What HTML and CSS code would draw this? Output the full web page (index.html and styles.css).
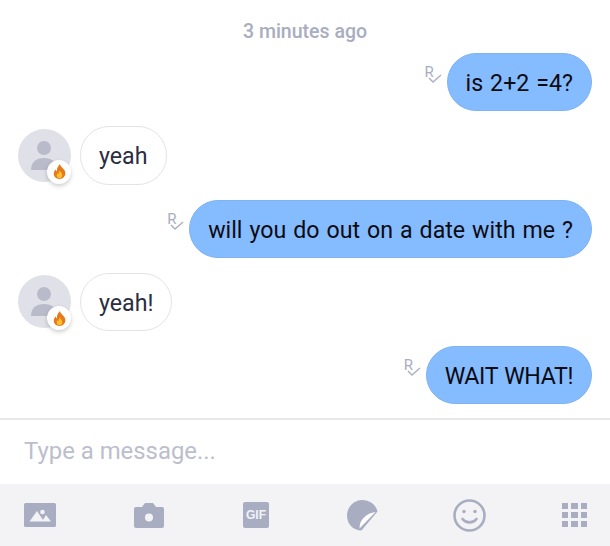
FILE: index.html
```html
<!DOCTYPE html>
<html lang="en">
  <head>
    <meta charset="UTF-8" />
    <meta name="viewport" content="width=device-width, initial-scale=1.0" />
    <title>Chat</title>
    <link rel="stylesheet" href="styles.css">
  </head>
  <body>
    <div class="chat">
      <div class="messages">
        <div class="time">3 minutes ago</div>

        <div class="row row-out">
          <div class="receipt">
            <span>R</span>
            <svg class="tick" viewBox="0 0 14 9"><path d="M1 4l4 4 8-7" /></svg>
          </div>
          <div class="bubble bubble-out">is 2+2 =4?</div>
        </div>

        <div class="row">
          <div class="avatar">
            <svg class="person" viewBox="0 0 53 53">
              <circle cx="26" cy="19" r="7" />
              <path d="M13 41c0-8 5-12 13-12s13 4 13 12z" />
            </svg>
            <div class="badge">
              <svg viewBox="0 0 14 16">
                <path class="flame-outer" d="M7.500 0c.5 3 4 4.500 5.500 8 1.200 3.800-1.500 8-6 8S.2 12.500 1 9c.4-1.500 1.200-2.500 2-3.200.1 1 .5 1.800 1.200 2.200C3.800 5 5.500 2 7.500 0z" />
                <path class="flame-inner" d="M7.300 7c.3 1.500 2.700 2.700 2.700 5.200C10 14 8.700 15 7 15s-3-1.100-3-2.800c0-1.200.7-2 1.300-2.500.1.600.4 1 .8 1.200C6 9.500 6.400 8 7.300 7z" />
              </svg>
            </div>
          </div>
          <div class="bubble bubble-in">yeah</div>
        </div>

        <div class="row row-out">
          <div class="receipt">
            <span>R</span>
            <svg class="tick" viewBox="0 0 14 9"><path d="M1 4l4 4 8-7" /></svg>
          </div>
          <div class="bubble bubble-out">will you do out on a date with me ?</div>
        </div>

        <div class="row">
          <div class="avatar">
            <svg class="person" viewBox="0 0 53 53">
              <circle cx="26" cy="19" r="7" />
              <path d="M13 41c0-8 5-12 13-12s13 4 13 12z" />
            </svg>
            <div class="badge">
              <svg viewBox="0 0 14 16">
                <path class="flame-outer" d="M7.500 0c.5 3 4 4.500 5.500 8 1.200 3.800-1.500 8-6 8S.2 12.500 1 9c.4-1.500 1.200-2.500 2-3.200.1 1 .5 1.800 1.200 2.200C3.800 5 5.500 2 7.500 0z" />
                <path class="flame-inner" d="M7.300 7c.3 1.500 2.700 2.700 2.700 5.200C10 14 8.700 15 7 15s-3-1.100-3-2.800c0-1.200.7-2 1.300-2.500.1.600.4 1 .8 1.200C6 9.500 6.400 8 7.300 7z" />
              </svg>
            </div>
          </div>
          <div class="bubble bubble-in">yeah!</div>
        </div>

        <div class="row row-out">
          <div class="receipt">
            <span>R</span>
            <svg class="tick" viewBox="0 0 14 9"><path d="M1 4l4 4 8-7" /></svg>
          </div>
          <div class="bubble bubble-out bubble-caps">WAIT WHAT!</div>
        </div>
      </div>

      <div class="composer">Type a message...</div>

      <div class="toolbar">
        <svg class="tool-photo" viewBox="0 0 32 24">
          <rect width="32" height="24" rx="1.500" class="fill" />
          <circle cx="18.500" cy="9" r="2.300" class="cut" />
          <path d="M5.500 18.500L13 8l7 10.500zM18 18.500l4-6.500 5 6.500z" class="cut" />
        </svg>
        <svg class="tool-camera" viewBox="0 0 30 25">
          <path class="fill" d="M2 4h6l2.500-3.500q.4-.5 1-.5h7q.6 0 1 .5L22 4h6q2 0 2 2v17q0 2-2 2H2q-2 0-2-2V6q0-2 2-2z" />
          <circle cx="15" cy="14.500" r="4" class="cut" />
        </svg>
        <div class="tool-gif">GIF</div>
        <svg class="tool-sticker" viewBox="0 0 31 31">
          <path class="fill" d="M15 0c8 0 14 5 15.500 11.500L14.500 30.500C6 30.500 0 24 0 15.500 0 7 7 0 15 0z" />
          <path class="peel" d="M28.500 12L12.500 28.500c0-5 1.500-8 4.500-11 3-3 7-5 11.500-5.500z" />
        </svg>
        <svg class="tool-smile" viewBox="0 0 33 33">
          <circle cx="16.500" cy="16.500" r="15" class="line" />
          <circle cx="11" cy="12.500" r="1.700" class="fill" />
          <circle cx="22" cy="12.500" r="1.700" class="fill" />
          <path d="M9.500 20c3.500 4.500 10.500 4.500 14 0" class="line" />
        </svg>
        <div class="tool-grid">
          <i></i><i></i><i></i>
          <i></i><i></i><i></i>
          <i></i><i></i><i></i>
        </div>
      </div>
    </div>
  </body>
</html>
```

FILE: styles.css
```css
body {
  margin: 0;
  padding: 0;
  background-color: #fff;
  font-family: Roboto, "Liberation Sans", sans-serif;
}

.chat {
  width: 610px;
  height: 546px;
  display: flex;
  flex-direction: column;
  overflow: hidden;
}

.messages {
  height: 418px;
  box-sizing: border-box;
  padding: 20px 18px 0;
  display: flex;
  flex-direction: column;
  gap: 15px;
}

.time {
  height: 18px;
  line-height: 24px;
  text-align: center;
  font-size: 19.500px;
  font-weight: 500;
  color: #a9adc0;
}

.row {
  display: flex;
  align-items: center;
  gap: 9px;
}

.row-out {
  justify-content: flex-end;
  gap: 5px;
}

.bubble {
  height: 58.250px;
  box-sizing: border-box;
  padding: 0 18px;
  line-height: 59px;
  font-size: 23.200px;
  word-spacing: 1.200px;
  border-radius: 29px;
  border: 1px solid transparent;
  white-space: nowrap;
}

.bubble-out {
  background-color: #85bcff;
  border-color: #7fb3f2;
  color: #0b0b12;
}

.bubble-caps {
  letter-spacing: -0.400px;
}

.bubble-in {
  background-color: #fff;
  border-color: #e3e4ea;
  color: #2b2d42;
}

.receipt {
  width: 17px;
  height: 22px;
  margin-top: -14px;
  position: relative;
  color: #a9adc0;
  font-size: 15px;
  line-height: 16px;
}

.tick {
  width: 14px;
  height: 9px;
  position: absolute;
  left: 3px;
  top: 10px;
  fill: none;
  stroke: #a9adc0;
  stroke-width: 1.300;
}

.avatar {
  width: 53px;
  height: 53px;
  position: relative;
  border-radius: 50%;
  background-color: #e0e1e8;
  flex-shrink: 0;
}

.person {
  display: block;
  width: 53px;
  height: 53px;
  fill: #b9bbca;
}

.badge {
  width: 24px;
  height: 24px;
  position: absolute;
  left: 29px;
  top: 31px;
  display: flex;
  align-items: center;
  justify-content: center;
  border-radius: 50%;
  background-color: #fff;
  box-shadow: 0 2px 4px rgba(0, 0, 0, 0.2);
}

.badge svg {
  width: 13px;
  height: 15px;
}

.flame-outer {
  fill: #e8781c;
}

.flame-inner {
  fill: #fbc02d;
}

.composer {
  height: 66px;
  box-sizing: border-box;
  padding-left: 24px;
  border-top: 2px solid #e8e8ec;
  line-height: 63px;
  font-size: 23.900px;
  color: #bcbecd;
}

.toolbar {
  height: 62px;
  box-sizing: border-box;
  padding-left: 24px;
  display: flex;
  align-items: center;
  background-color: #f3f3f6;
}

.fill {
  fill: #a9adc2;
}

.cut {
  fill: #f3f3f6;
}

.peel {
  fill: #fff;
}

.line {
  fill: none;
  stroke: #a9adc2;
  stroke-width: 2.600;
  stroke-linecap: round;
}

.tool-photo {
  width: 32px;
  height: 24px;
}

.tool-camera {
  width: 30px;
  height: 25px;
  margin-left: 78px;
}

.tool-gif {
  width: 26px;
  height: 26px;
  margin-left: 79px;
  border-radius: 2px;
  background-color: #a9adc2;
  color: #f3f3f6;
  font-family: "Liberation Sans", sans-serif;
  font-size: 12px;
  font-weight: 700;
  line-height: 27px;
  text-align: center;
}

.tool-sticker {
  width: 31px;
  height: 31px;
  margin-left: 78px;
}

.tool-smile {
  width: 33px;
  height: 33px;
  margin-left: 75px;
}

.tool-grid {
  width: 25px;
  height: 24px;
  margin-left: 76px;
  display: grid;
  grid-template-columns: repeat(3, 1fr);
  gap: 3px;
}

.tool-grid i {
  background-color: #a9adc2;
}
```
